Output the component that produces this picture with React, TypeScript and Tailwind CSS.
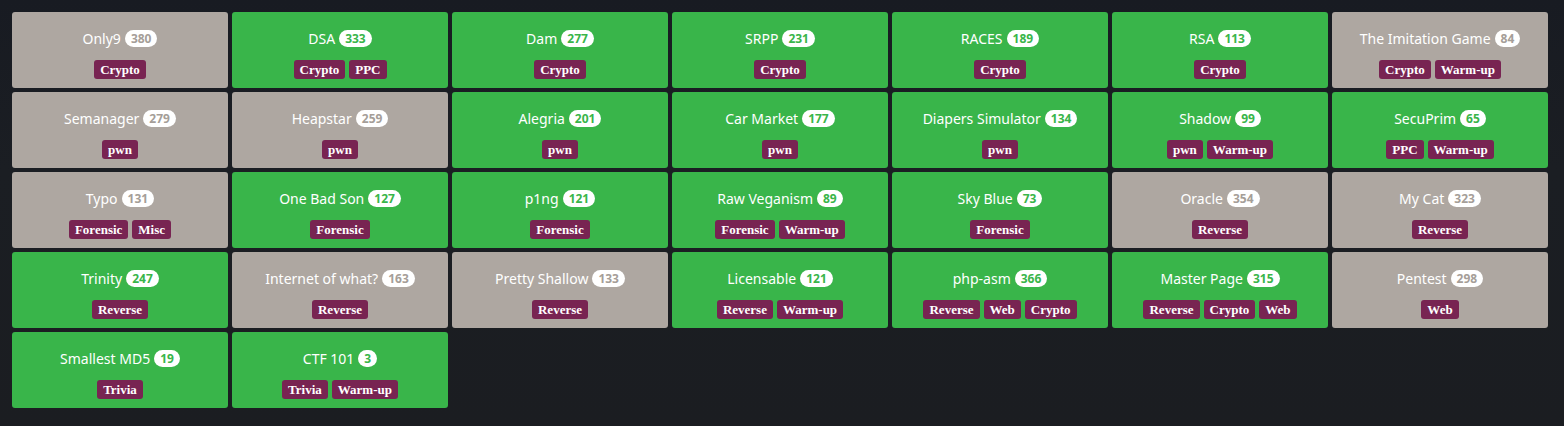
import React from 'react';

type Challenge = {
  name: string;
  points: number;
  tags: string[];
  solved: boolean;
};

const challenges: Challenge[] = [
  { name: 'Only9', points: 380, tags: ['Crypto'], solved: false },
  { name: 'DSA', points: 333, tags: ['Crypto', 'PPC'], solved: true },
  { name: 'Dam', points: 277, tags: ['Crypto'], solved: true },
  { name: 'SRPP', points: 231, tags: ['Crypto'], solved: true },
  { name: 'RACES', points: 189, tags: ['Crypto'], solved: true },
  { name: 'RSA', points: 113, tags: ['Crypto'], solved: true },
  { name: 'The Imitation Game', points: 84, tags: ['Crypto', 'Warm-up'], solved: false },
  { name: 'Semanager', points: 279, tags: ['pwn'], solved: false },
  { name: 'Heapstar', points: 259, tags: ['pwn'], solved: false },
  { name: 'Alegria', points: 201, tags: ['pwn'], solved: true },
  { name: 'Car Market', points: 177, tags: ['pwn'], solved: true },
  { name: 'Diapers Simulator', points: 134, tags: ['pwn'], solved: true },
  { name: 'Shadow', points: 99, tags: ['pwn', 'Warm-up'], solved: true },
  { name: 'SecuPrim', points: 65, tags: ['PPC', 'Warm-up'], solved: true },
  { name: 'Typo', points: 131, tags: ['Forensic', 'Misc'], solved: false },
  { name: 'One Bad Son', points: 127, tags: ['Forensic'], solved: true },
  { name: 'p1ng', points: 121, tags: ['Forensic'], solved: true },
  { name: 'Raw Veganism', points: 89, tags: ['Forensic', 'Warm-up'], solved: true },
  { name: 'Sky Blue', points: 73, tags: ['Forensic'], solved: true },
  { name: 'Oracle', points: 354, tags: ['Reverse'], solved: false },
  { name: 'My Cat', points: 323, tags: ['Reverse'], solved: false },
  { name: 'Trinity', points: 247, tags: ['Reverse'], solved: true },
  { name: 'Internet of what?', points: 163, tags: ['Reverse'], solved: false },
  { name: 'Pretty Shallow', points: 133, tags: ['Reverse'], solved: false },
  { name: 'Licensable', points: 121, tags: ['Reverse', 'Warm-up'], solved: true },
  { name: 'php-asm', points: 366, tags: ['Reverse', 'Web', 'Crypto'], solved: true },
  { name: 'Master Page', points: 315, tags: ['Reverse', 'Crypto', 'Web'], solved: true },
  { name: 'Pentest', points: 298, tags: ['Web'], solved: false },
  { name: 'Smallest MD5', points: 19, tags: ['Trivia'], solved: true },
  { name: 'CTF 101', points: 3, tags: ['Trivia', 'Warm-up'], solved: true },
];

function Card({ c }: { c: Challenge }) {
  return (
    <div
      className={
        'flex h-[76px] flex-col items-center rounded-[3px] pt-[18px] ' +
        (c.solved ? 'bg-[#39b54a]' : 'bg-[#aea7a1]')
      }
    >
      <div className="flex h-[17px] items-center gap-[4px] font-['Noto_Sans'] text-[14px] text-white">
        <span className="leading-none">{c.name}</span>
        <span
          className={
            'flex h-[17px] items-center rounded-full bg-white px-[6px] text-[12px] leading-none font-bold ' +
            (c.solved ? 'text-[#39b54a]' : 'text-[#a59e98]')
          }
        >
          {c.points}
        </span>
      </div>
      <div className="mt-[13px] flex gap-[4px]">
        {c.tags.map((t) => (
          <span
            key={t}
            className="flex h-[19px] items-center rounded-[3px] bg-[#782452] px-[6px] font-['Liberation_Serif'] text-[13px] leading-none font-bold text-white"
          >
            {t}
          </span>
        ))}
      </div>
    </div>
  );
}

export default function App() {
  return (
    <div className="h-[426px] w-full bg-[linear-gradient(180deg,#181b22_0%,#1b1e23_40%,#1b1d21_100%)] pt-3 pl-3">
      <div className="grid w-[1536px] grid-cols-7 gap-[4px]">
        {challenges.map((c) => (
          <Card key={c.name} c={c} />
        ))}
      </div>
    </div>
  );
}
